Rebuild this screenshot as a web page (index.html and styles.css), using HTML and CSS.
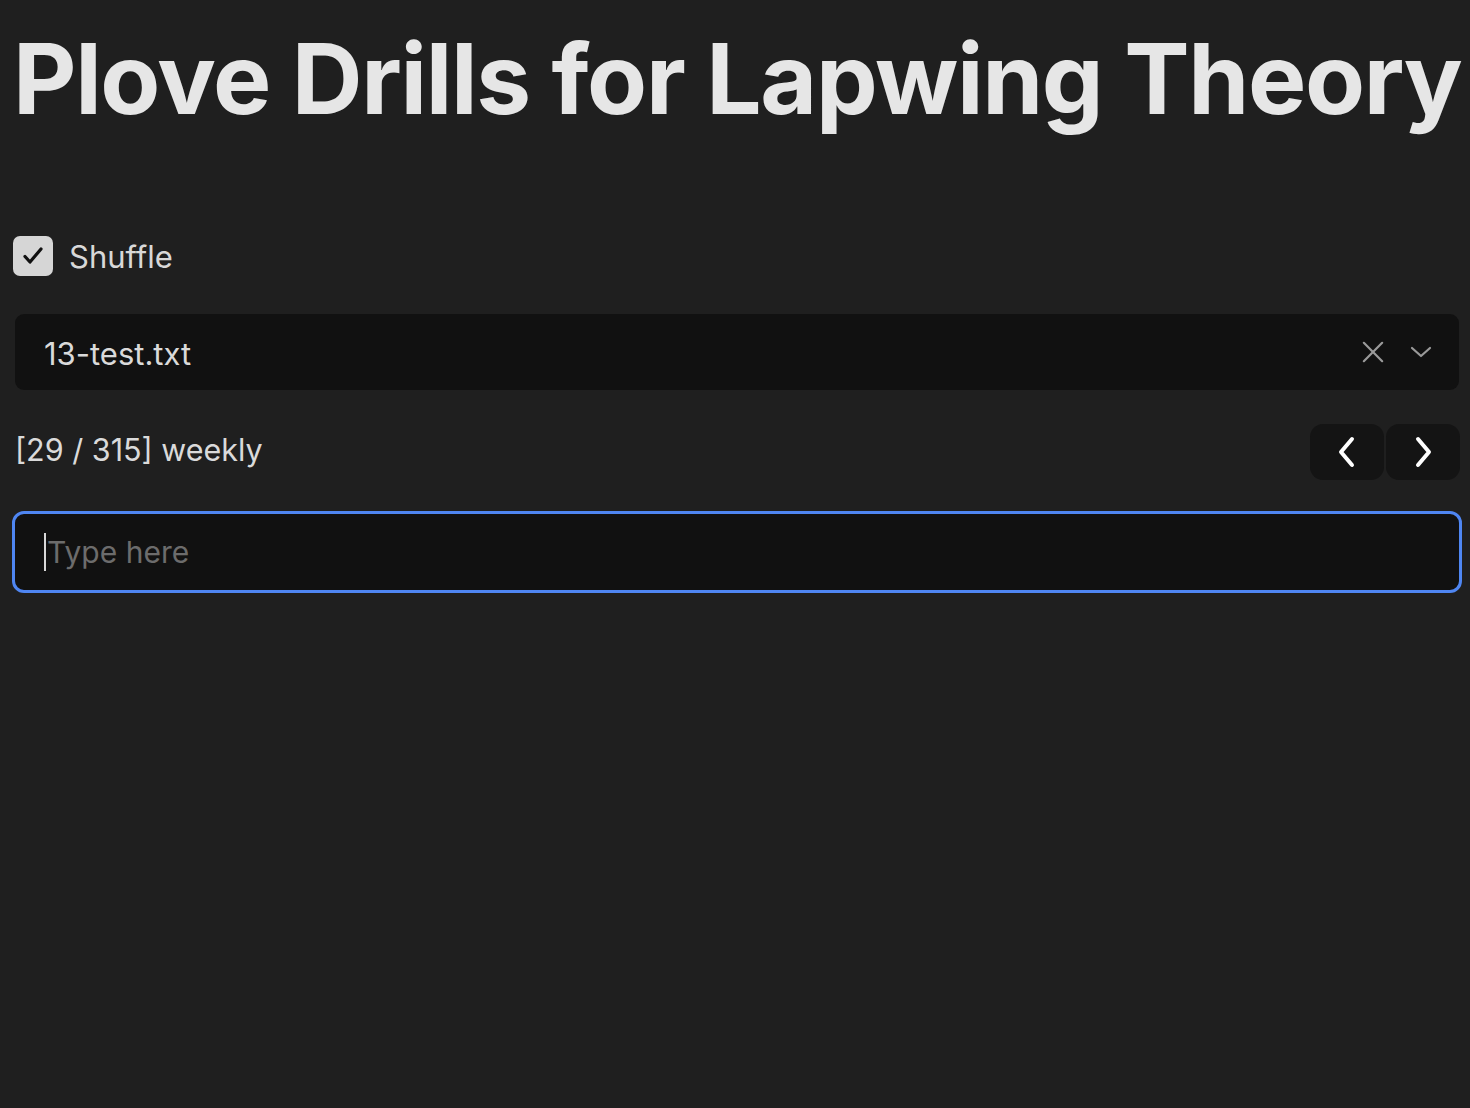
FILE: index.html
```html
<!DOCTYPE html>
<html>
<head>
<meta charset="utf-8">
<link rel="stylesheet" href="styles.css">
</head>
<body>
<div class="page">
  <h1 class="title">Plove Drills for Lapwing Theory</h1>
  <label class="check-row">
    <span class="checkbox">
      <svg width="26" height="26" viewBox="0 0 26 26"><path d="M5 13.5l5 5.5L21 6" fill="none" stroke="#111" stroke-width="3.2" stroke-linecap="round" stroke-linejoin="round"/></svg>
    </span>
    <span class="check-label">Shuffle</span>
  </label>
  <div class="select">
    <span class="select-value">13-test.txt</span>
    <span class="select-icons">
      <svg class="icon-x" width="24" height="24" viewBox="0 0 24 24"><path d="M2 2L22 22M22 2L2 22" stroke="#9a9a9a" stroke-width="2.4" stroke-linecap="round"/></svg>
      <svg class="icon-down" width="22" height="12" viewBox="0 0 22 12"><path d="M2 2l9 8 9-8" fill="none" stroke="#9a9a9a" stroke-width="2.2" stroke-linecap="round" stroke-linejoin="round"/></svg>
    </span>
  </div>
  <div class="nav-row">
    <span class="counter">[29 / 315] weekly</span>
    <div class="nav-buttons">
      <button class="nav-btn"><svg width="20" height="32" viewBox="0 0 20 32"><path d="M15 3L4 16l11 13" fill="none" stroke="#fff" stroke-width="4" stroke-linecap="round" stroke-linejoin="round"/></svg></button>
      <button class="nav-btn"><svg width="20" height="32" viewBox="0 0 20 32"><path d="M5 3l11 13L5 29" fill="none" stroke="#fff" stroke-width="4" stroke-linecap="round" stroke-linejoin="round"/></svg></button>
    </div>
  </div>
  <div class="input-box">
    <span class="caret"></span><span class="placeholder">Type here</span>
  </div>
</div>
</body>
</html>
```

FILE: styles.css
```css
html, body {
  margin: 0;
  padding: 0;
  background: #1f1f1f;
  height: 100%;
}
body {
  font-family: Inter, "Noto Sans", sans-serif;
  color: #dcdcdc;
  overflow: hidden;
}
.page {
  padding: 0 10px 0 12px;
  min-height: 1108px;
  box-sizing: border-box;
}
.title {
  margin: 0;
  padding-top: 19px;
  font-size: 98px;
  font-weight: 700;
  letter-spacing: -1.35px;
  line-height: 120px;
  color: #e6e6e6;
  white-space: nowrap;
  margin-left: 1px;
}
.check-row {
  display: flex;
  align-items: center;
  margin-top: 97px;
  margin-left: 1px;
  gap: 16px;
  height: 40px;
}
.checkbox {
  width: 40px;
  height: 40px;
  border-radius: 7px;
  background: #d6d6d6;
  display: flex;
  align-items: center;
  justify-content: center;
}
.check-label {
  font-size: 31px;
  color: #d8d8d8;
}
.select {
  margin: 38px 1px 0 3px;
  height: 76px;
  background: #111111;
  border-radius: 9px;
  display: flex;
  align-items: center;
  justify-content: space-between;
  padding: 2px 27px 0 29px;
  box-sizing: border-box;
}
.select-value {
  font-size: 31px;
  color: #dadada;
}
.select-icons {
  display: flex;
  align-items: center;
  gap: 26px;
  margin-top: -2px;
}
.icon-x {
  width: 22px;
  height: 22px;
}
.nav-row {
  display: flex;
  align-items: center;
  justify-content: space-between;
  margin: 34px 0 0 3px;
  height: 56px;
}
.counter {
  font-size: 30.5px;
  color: #dadada;
  margin-top: -6px;
}
.nav-buttons {
  display: flex;
  gap: 2px;
}
.nav-btn {
  width: 74px;
  height: 56px;
  border: none;
  border-radius: 13px;
  background: #141414;
  display: flex;
  align-items: center;
  justify-content: center;
  padding: 0;
}
.input-box {
  margin: 31px -2px 0 0;
  height: 76px;
  border: 3px solid #4f86f2;
  border-radius: 12px;
  background: #111111;
  display: flex;
  align-items: center;
  padding-left: 29px;
}
.caret {
  width: 2px;
  height: 38px;
  background: #d8d8d8;
}
.placeholder {
  font-size: 30px;
  color: #6c6c6c;
  margin-left: 1px;
}
```
